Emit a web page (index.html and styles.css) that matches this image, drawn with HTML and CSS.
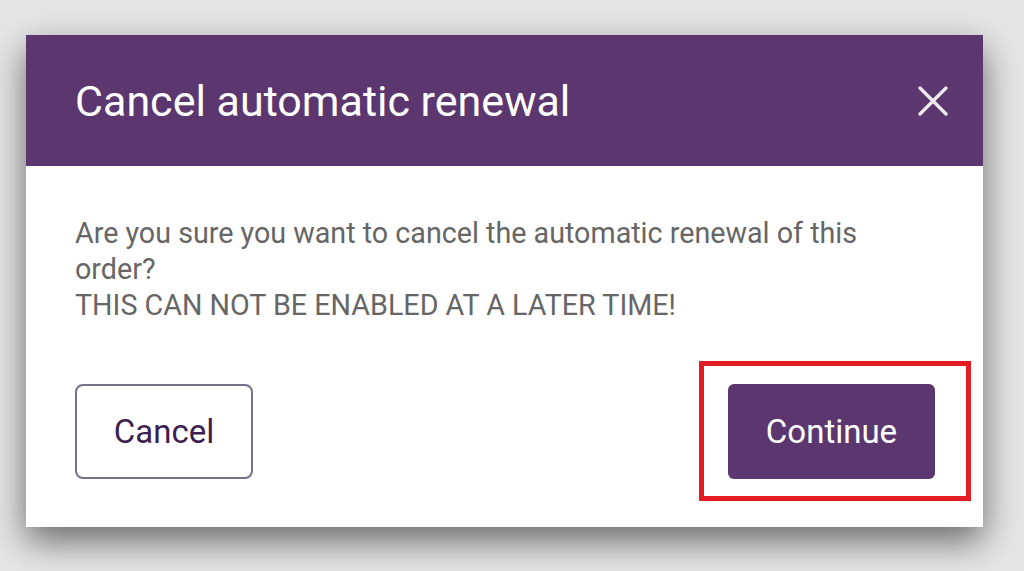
FILE: index.html
```html
<!DOCTYPE html>
<html lang="en">
<head>
	<meta charset="UTF-8">
	<meta name="viewport" content="width=device-width, initial-scale=1.0">
	<title>Cancel automatic renewal</title>
	<link rel="stylesheet" href="styles.css">
</head>
<body>
	<div class="modal">
		<div class="modal-header">
			<h1>Cancel automatic renewal</h1>
			<button class="close" aria-label="Close">
				<svg width="30" height="30" viewBox="0 0 30 30">
					<path d="M2 2 L28 28 M28 2 L2 28" stroke="#ececf0" stroke-width="3.2" stroke-linecap="round"/>
				</svg>
			</button>
		</div>
		<div class="modal-body">
			<p>Are you sure you want to cancel the automatic renewal of this order?<br>THIS CAN NOT BE ENABLED AT A LATER TIME!</p>
			<div class="actions">
				<button class="btn btn-outline">Cancel</button>
				<span class="highlight">
					<button class="btn btn-primary">Continue</button>
				</span>
			</div>
		</div>
	</div>
</body>
</html>
```

FILE: styles.css
```css
body{
	margin: 0;
	padding: 35px 0 0 26px;
	background-color: #e6e6e6;
	font-family: Roboto, "Liberation Sans", sans-serif;
	height: 571px;
	box-sizing: border-box;
	overflow: hidden;
}
.modal{
	width: 957px;
	background-color: #fff;
	box-shadow: 0 14px 34px rgba(0,0,0,0.55);
}
.modal-header{
	display: flex;
	align-items: center;
	justify-content: space-between;
	height: 131px;
	padding: 0 35px 0 49px;
	background-color: #5c376f;
}
.modal-header h1{
	margin: 0;
	color: #fff;
	font-size: 43px;
	font-weight: 400;
}
.close{
	background: none;
	border: none;
	padding: 0;
	display: flex;
	cursor: pointer;
}
.modal-body{
	padding: 49px 48px 48px 49px;
}
.modal-body p{
	margin: 0 0 61px 0;
	color: #666;
	font-size: 28.7px;
	line-height: 36px;
}
.actions{
	display: flex;
	justify-content: space-between;
	align-items: center;
}
.btn{
	height: 95px;
	font-family: Roboto, "Liberation Sans", sans-serif;
	font-size: 33px;
	border-radius: 8px;
	cursor: pointer;
}
.btn-outline{
	width: 178px;
	background-color: #fff;
	color: #3e1f4f;
	border: 2px solid #77708a;
}
.btn-primary{
	width: 207px;
	background-color: #5c376f;
	color: #fff;
	border: none;
	border-radius: 6px;
}
.highlight{
	position: relative;
	display: flex;
}
.highlight::after{
	content: "";
	position: absolute;
	left: -29px;
	right: -36px;
	top: -23px;
	bottom: -22px;
	border: 5px solid #e31b23;
	pointer-events: none;
}
```
